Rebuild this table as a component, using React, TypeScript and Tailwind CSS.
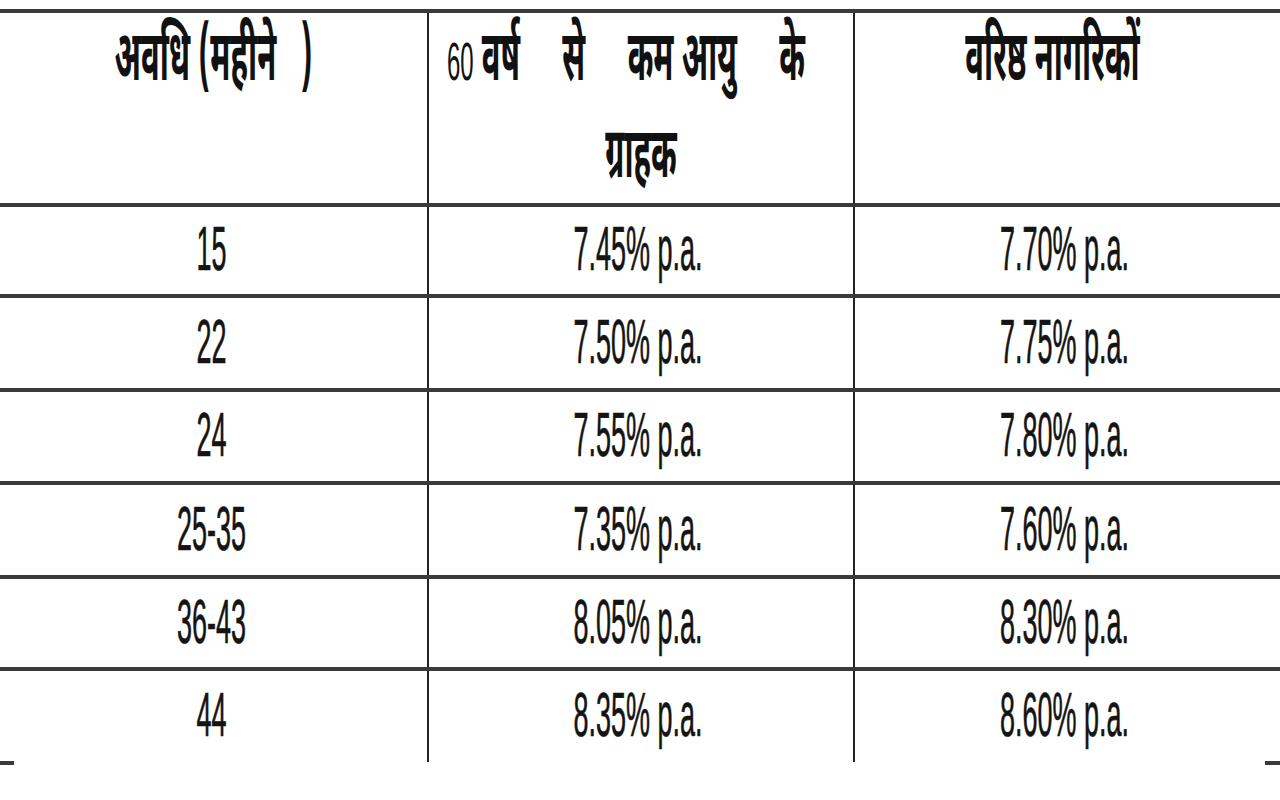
const rows: [string, string, string][] = [
  ["15", "7.45% p.a.", "7.70% p.a."],
  ["22", "7.50% p.a.", "7.75% p.a."],
  ["24", "7.55% p.a.", "7.80% p.a."],
  ["25-35", "7.35% p.a.", "7.60% p.a."],
  ["36-43", "8.05% p.a.", "8.30% p.a."],
  ["44", "8.35% p.a.", "8.60% p.a."],
];

// row heights incl. the 4px rule on top
const rowHeights = ["h-[91px]", "h-[94px]", "h-[93px]", "h-[94px]", "h-[92px]", "h-[95px]"];

const hindi = "font-['Noto_Sans_Devanagari','Lohit_Devanagari','Noto_Sans',sans-serif]";
const latin = "font-['Liberation_Sans',Arial,sans-serif]";

function Num({ children }: { children: string }) {
  return (
    <span className={`inline-block ${latin} text-[27px] leading-none text-[#141414] scale-y-[2.35] whitespace-pre [-webkit-text-stroke:0.3px_#141414]`}>
      {children}
    </span>
  );
}

function Hi({ children }: { children: string }) {
  return (
    <span className={`inline-block ${hindi} font-bold text-[31px] leading-none text-[#111] scale-y-[2.3] whitespace-pre`}>
      {children}
    </span>
  );
}

export default function App() {
  return (
    <div className="w-[1280px] h-[800px] bg-white pt-[9px] overflow-hidden">
      {/* header */}
      <div className="grid grid-cols-[427px_426px_1fr] h-[194px] border-t-4 border-[#3a3a3a]">
        <div className="flex items-start justify-center pt-[34px]">
          <Hi>{"अवधि (महीने   )"}</Hi>
        </div>
        <div className="border-l-2 border-[#222] flex flex-col pt-[34px]">
          <div className="flex justify-between items-end pl-[18px] pr-[48px]">
            <span className="flex items-end gap-[8px]">
              <span className={`inline-block ${latin} text-[24px] leading-none text-[#111] scale-y-[2.2] translate-y-[-4px]`}>60</span>
              <Hi>वर्ष</Hi>
            </span>
            <Hi>से</Hi>
            <Hi>कम आयु</Hi>
            <Hi>के</Hi>
          </div>
          <div className="flex justify-center mt-[66px]">
            <Hi>ग्राहक</Hi>
          </div>
        </div>
        <div className="border-l-2 border-[#222] flex items-start justify-center pt-[34px] pr-[30px]">
          <Hi>वरिष्ठ नागरिकों</Hi>
        </div>
      </div>

      {rows.map((r, i) => (
        <div
          key={r[0]}
          className={`grid grid-cols-[427px_426px_1fr] ${rowHeights[i]} border-t-4 border-[#3a3a3a]`}
        >
          <div className="flex items-center justify-center pr-[4px]">
            <Num>{r[0]}</Num>
          </div>
          <div className="border-l-2 border-[#222] flex items-center justify-center pr-[6px]">
            <Num>{r[1]}</Num>
          </div>
          <div className="border-l-2 border-[#222] flex items-center justify-center pr-[6px]">
            <Num>{r[2]}</Num>
          </div>
        </div>
      ))}

      {/* stub ends of the missing bottom rule */}
      <div className="flex justify-between -mt-[1px]">
        <div className="w-[14px] h-[4px] bg-[#3a3a3a]" />
        <div className="w-[15px] h-[4px] bg-[#3a3a3a]" />
      </div>
    </div>
  );
}
